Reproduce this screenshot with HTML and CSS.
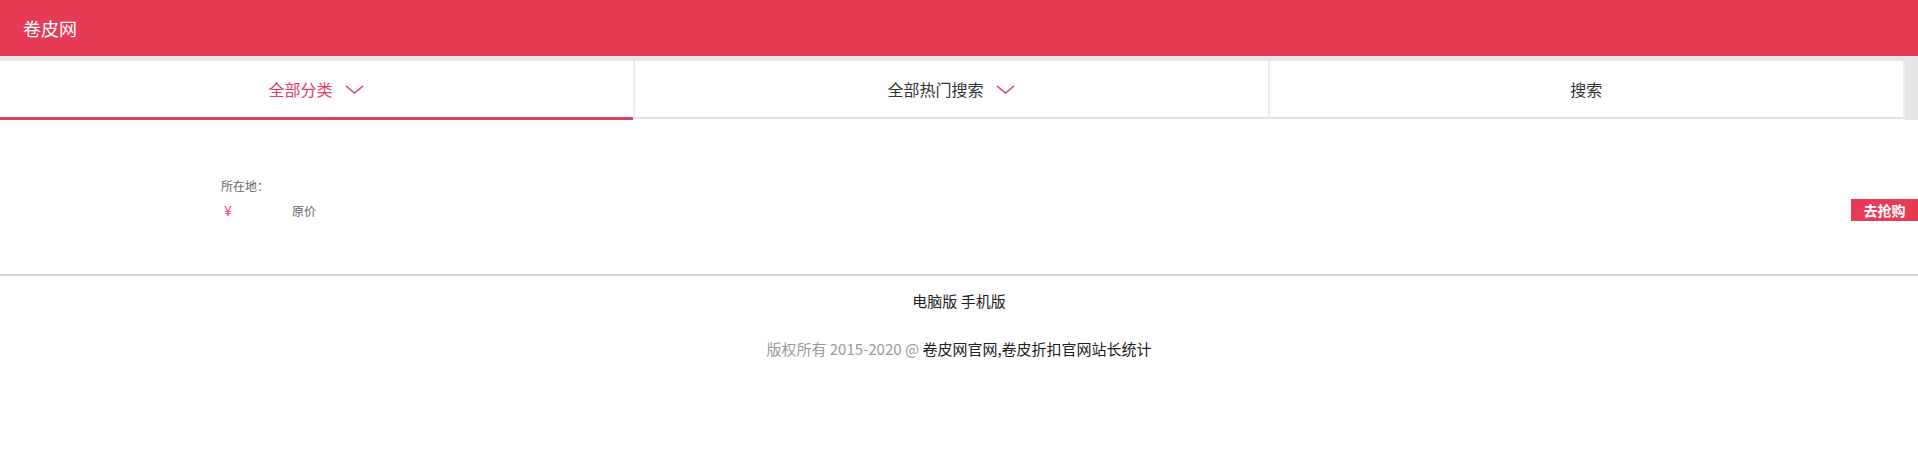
FILE: index.html
```html
<!DOCTYPE html>
<html lang="zh-CN">
<head>
<meta charset="utf-8">
<title>卷皮网</title>
<link rel="stylesheet" href="styles.css">
</head>
<body>
<header class="topbar">
  <span class="brand">卷皮网</span>
</header>
<nav class="tabs">
  <div class="tab active">全部分类<svg class="chev" viewBox="0 0 19 9" width="19" height="9"><polyline points="1,1 9.5,8 18,1"/></svg></div>
  <div class="tab">全部热门搜索<svg class="chev" viewBox="0 0 19 9" width="19" height="9"><polyline points="1,1 9.5,8 18,1"/></svg></div>
  <div class="tab last">搜索</div>
</nav>
<main class="content">
  <div class="item">
    <div class="loc">所在地：</div>
    <div class="price-row">
      <span class="yen">¥</span>
      <span class="orig">原价</span>
      <a class="buy">去抢购</a>
    </div>
  </div>
</main>
<footer class="footer">
  <div class="versions"><a>电脑版</a> <a>手机版</a></div>
  <div class="copy">版权所有 2015-2020 @ <a>卷皮网官网,卷皮折扣官网站长统计</a></div>
</footer>
</body>
</html>
```
FILE: styles.css
```css
* { box-sizing: border-box; }
html, body {
  margin: 0;
  padding: 0;
  background: #fff;
  font-family: "Noto Sans CJK SC", "Noto Sans", "Liberation Sans", sans-serif;
}
.topbar {
  height: 56px;
  background: #e73a54;
  padding-left: 23px;
  display: flex;
  align-items: center;
}
.brand {
  color: #fff;
  font-size: 18px;
  line-height: 24px;
}
.tabs {
  display: flex;
  background: #e6e6e6;
  padding-top: 5px;
  height: 64px;
}
.tab {
  box-sizing: content-box;
  width: 33%;
  height: 56px;
  background: #fff;
  display: flex;
  align-items: center;
  justify-content: center;
  font-size: 16px;
  color: #333;
  border-bottom: 2px solid #e3e3e3;
  border-left: 2px solid #ececec;
  box-shadow: 0 1px 0 #fff;
}
.tab.active {
  color: #e0405c;
  border-left: none;
  border-bottom: 3px solid #d9435f;
  box-shadow: none;
}
.tab.last {
  border-right: 2px solid #f0f0f0;
}
.chev {
  margin-left: 13px;
  fill: none;
  stroke: #e2445f;
  stroke-width: 1.6;
}
.content {
  padding-top: 57px;
  padding-bottom: 53px;
  border-bottom: 2px solid #d4d4d4;
}
.item {
  padding-left: 221px;
}
.loc {
  font-size: 12px;
  line-height: 18px;
  color: #666;
}
.price-row {
  margin-top: 4px;
  height: 22px;
  display: flex;
  align-items: center;
  font-size: 12px;
  color: #666;
}
.yen {
  color: #e8456a;
  font-size: 14px;
  width: 71px;
  padding-left: 3px;
}
.orig {
  color: #666;
}
.buy {
  margin-left: auto;
  width: 67px;
  height: 22px;
  background: #e73a54;
  color: #fff;
  font-size: 14px;
  font-weight: bold;
  display: flex;
  align-items: center;
  justify-content: center;
}
.footer {
  text-align: center;
  padding-top: 15px;
}
.versions {
  font-size: 15px;
  line-height: 20px;
  color: #222;
}
.copy {
  margin-top: 28px;
  font-size: 15px;
  line-height: 20px;
  color: #999;
}
.copy a, .versions a {
  color: #222;
}
```
